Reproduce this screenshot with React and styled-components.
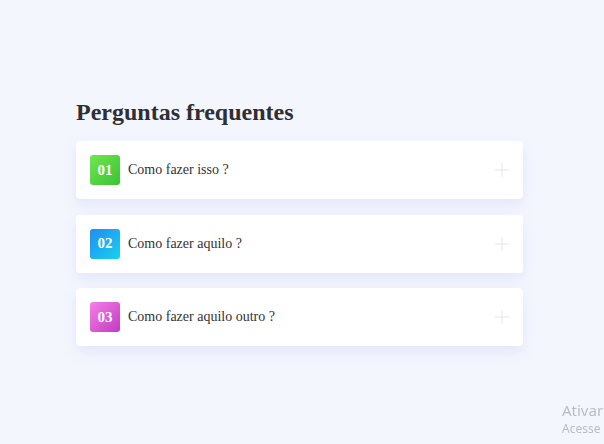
import React, { useState } from "react";
import styled, { createGlobalStyle } from "styled-components";

const GlobalStyle = createGlobalStyle`
  html, body {
    margin: 0;
    padding: 0;
    background: #f4f6fe;
    font-family: "Liberation Serif", "Times New Roman", serif;
  }
`;

const faqs = [
  { id: "01", question: "Como fazer isso ?", tone: "green" },
  { id: "02", question: "Como fazer aquilo ?", tone: "blue" },
  { id: "03", question: "Como fazer aquilo outro ?", tone: "pink" },
];

const gradients = {
  green: "linear-gradient(135deg, #74e64f 0%, #38c237 100%)",
  blue: "linear-gradient(135deg, #1e8ef0 0%, #1bd0f2 100%)",
  pink: "linear-gradient(135deg, #f57fe6 0%, #c23ac4 100%)",
};

const Page = styled.div`
  min-height: 444px;
  box-sizing: border-box;
  padding: 95px 81px 0 76px;
`;

const Title = styled.h1`
  margin: 0 0 12px;
  font-size: 24px;
  line-height: 34px;
  font-weight: bold;
  color: #2e2e35;
`;

const List = styled.div`
  display: flex;
  flex-direction: column;
  gap: 15.5px;
`;

const Card = styled.div`
  background: #fff;
  border-radius: 4px;
  box-shadow: 0 6px 14px rgba(110, 120, 200, 0.12);
`;

const Header = styled.button`
  width: 100%;
  height: 58px;
  display: flex;
  align-items: center;
  gap: 8px;
  padding: 0 14px;
  border: 0;
  background: transparent;
  cursor: pointer;
  font-family: inherit;
  text-align: left;
`;

const Badge = styled.span`
  width: 30px;
  height: 30px;
  flex: none;
  display: flex;
  align-items: center;
  justify-content: center;
  border-radius: 3px;
  background: ${(p) => gradients[p.$tone]};
  color: #fff;
  font-weight: bold;
  font-size: 15px;
`;

const Question = styled.span`
  flex: 1;
  font-size: 14px;
  color: #333;
`;

const Plus = styled.svg`
  width: 14px;
  height: 14px;
  flex: none;
`;

const Answer = styled.div`
  padding: 0 14px 16px 52px;
  font-size: 14px;
  color: #666;
`;

const Watermark = styled.div`
  position: fixed;
  left: 562px;
  top: 401px;
  display: flex;
  flex-direction: column;
  gap: 3px;
  font-family: "Noto Sans", "Open Sans", sans-serif;
  color: #b9bcc8;
  white-space: nowrap;
`;

const WatermarkLine = styled.div`
  font-size: ${(p) => (p.$small ? "12px" : "15px")};
  line-height: ${(p) => (p.$small ? "14px" : "18px")};
`;

const App = () => {
  const [open, setOpen] = useState(null);
  return (
    <>
      <GlobalStyle />
      <Page>
        <Title>Perguntas frequentes</Title>
        <List>
          {faqs.map((item) => (
            <Card key={item.id}>
              <Header onClick={() => setOpen(open === item.id ? null : item.id)}>
                <Badge $tone={item.tone}>{item.id}</Badge>
                <Question>{item.question}</Question>
                <Plus viewBox="0 0 14 14">
                  <path d="M7 0v14M0 7h14" stroke="#e4e5ea" strokeWidth="1" fill="none" />
                </Plus>
              </Header>
              {open === item.id && <Answer>Resposta aqui.</Answer>}
            </Card>
          ))}
        </List>
      </Page>
      <Watermark>
        <WatermarkLine>Ativar</WatermarkLine>
        <WatermarkLine $small>Acesse</WatermarkLine>
      </Watermark>
    </>
  );
};

export default App;
